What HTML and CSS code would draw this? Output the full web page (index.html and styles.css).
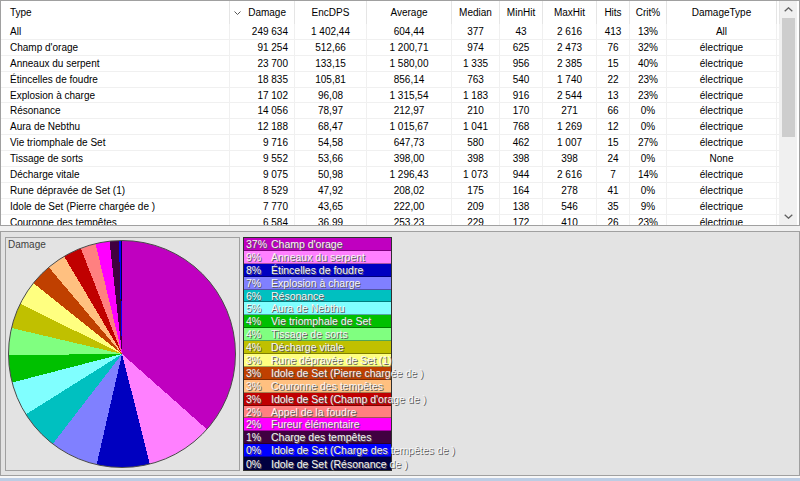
FILE: index.html
```html
<!DOCTYPE html>
<html lang="fr">
<head>
<meta charset="utf-8">
<title>Damage</title>
<link rel="stylesheet" href="styles.css">
</head>
<body>
<div class="app">
  <div class="grid-panel">
    <div class="table">
      <div class="cols head">
        <div class="c l">Type</div>
        <div class="c r sort"><svg class="sort-ico" width="7" height="4" viewBox="0 0 7 4"><polyline points="0.5,0.5 3.5,3.5 6.5,0.5" fill="none" stroke="#555" stroke-width="1"/></svg><span>Damage</span></div>
        <div class="c">EncDPS</div>
        <div class="c">Average</div>
        <div class="c">Median</div>
        <div class="c">MinHit</div>
        <div class="c">MaxHit</div>
        <div class="c">Hits</div>
        <div class="c">Crit%</div>
        <div class="c">DamageType</div>
        <div class="c"></div>
      </div>
      <div class="cols row"><div class="c l">All</div><div class="c r">249&nbsp;634</div><div class="c">1&nbsp;402,44</div><div class="c">604,44</div><div class="c">377</div><div class="c">43</div><div class="c">2&nbsp;616</div><div class="c">413</div><div class="c">13%</div><div class="c">All</div><div class="c"></div></div>
      <div class="cols row"><div class="c l">Champ d'orage</div><div class="c r">91&nbsp;254</div><div class="c">512,66</div><div class="c">1&nbsp;200,71</div><div class="c">974</div><div class="c">625</div><div class="c">2&nbsp;473</div><div class="c">76</div><div class="c">32%</div><div class="c">électrique</div><div class="c"></div></div>
      <div class="cols row"><div class="c l">Anneaux du serpent</div><div class="c r">23&nbsp;700</div><div class="c">133,15</div><div class="c">1&nbsp;580,00</div><div class="c">1&nbsp;335</div><div class="c">956</div><div class="c">2&nbsp;385</div><div class="c">15</div><div class="c">40%</div><div class="c">électrique</div><div class="c"></div></div>
      <div class="cols row"><div class="c l">Étincelles de foudre</div><div class="c r">18&nbsp;835</div><div class="c">105,81</div><div class="c">856,14</div><div class="c">763</div><div class="c">540</div><div class="c">1&nbsp;740</div><div class="c">22</div><div class="c">23%</div><div class="c">électrique</div><div class="c"></div></div>
      <div class="cols row"><div class="c l">Explosion à charge</div><div class="c r">17&nbsp;102</div><div class="c">96,08</div><div class="c">1&nbsp;315,54</div><div class="c">1&nbsp;183</div><div class="c">916</div><div class="c">2&nbsp;544</div><div class="c">13</div><div class="c">23%</div><div class="c">électrique</div><div class="c"></div></div>
      <div class="cols row"><div class="c l">Résonance</div><div class="c r">14&nbsp;056</div><div class="c">78,97</div><div class="c">212,97</div><div class="c">210</div><div class="c">170</div><div class="c">271</div><div class="c">66</div><div class="c">0%</div><div class="c">électrique</div><div class="c"></div></div>
      <div class="cols row"><div class="c l">Aura de Nebthu</div><div class="c r">12&nbsp;188</div><div class="c">68,47</div><div class="c">1&nbsp;015,67</div><div class="c">1&nbsp;041</div><div class="c">768</div><div class="c">1&nbsp;269</div><div class="c">12</div><div class="c">0%</div><div class="c">électrique</div><div class="c"></div></div>
      <div class="cols row"><div class="c l">Vie triomphale de Set</div><div class="c r">9&nbsp;716</div><div class="c">54,58</div><div class="c">647,73</div><div class="c">580</div><div class="c">462</div><div class="c">1&nbsp;007</div><div class="c">15</div><div class="c">27%</div><div class="c">électrique</div><div class="c"></div></div>
      <div class="cols row"><div class="c l">Tissage de sorts</div><div class="c r">9&nbsp;552</div><div class="c">53,66</div><div class="c">398,00</div><div class="c">398</div><div class="c">398</div><div class="c">398</div><div class="c">24</div><div class="c">0%</div><div class="c">None</div><div class="c"></div></div>
      <div class="cols row"><div class="c l">Décharge vitale</div><div class="c r">9&nbsp;075</div><div class="c">50,98</div><div class="c">1&nbsp;296,43</div><div class="c">1&nbsp;073</div><div class="c">944</div><div class="c">2&nbsp;616</div><div class="c">7</div><div class="c">14%</div><div class="c">électrique</div><div class="c"></div></div>
      <div class="cols row"><div class="c l">Rune dépravée de Set (1)</div><div class="c r">8&nbsp;529</div><div class="c">47,92</div><div class="c">208,02</div><div class="c">175</div><div class="c">164</div><div class="c">278</div><div class="c">41</div><div class="c">0%</div><div class="c">électrique</div><div class="c"></div></div>
      <div class="cols row"><div class="c l">Idole de Set (Pierre chargée de )</div><div class="c r">7&nbsp;770</div><div class="c">43,65</div><div class="c">222,00</div><div class="c">209</div><div class="c">138</div><div class="c">546</div><div class="c">35</div><div class="c">9%</div><div class="c">électrique</div><div class="c"></div></div>
      <div class="cols row"><div class="c l">Couronne des tempêtes</div><div class="c r">6&nbsp;584</div><div class="c">36,99</div><div class="c">253,23</div><div class="c">229</div><div class="c">172</div><div class="c">410</div><div class="c">26</div><div class="c">23%</div><div class="c">électrique</div><div class="c"></div></div>
    </div>
    <div class="vscroll">
      <div class="sb-btn"><svg width="9" height="5" viewBox="0 0 9 5"><polyline points="0.7,4.3 4.5,0.8 8.3,4.3" fill="none" stroke="#606060" stroke-width="1.3"/></svg></div>
      <div class="sb-track"><div class="sb-thumb"></div></div>
      <div class="sb-btn"><svg width="9" height="5" viewBox="0 0 9 5"><polyline points="0.7,0.7 4.5,4.2 8.3,0.7" fill="none" stroke="#606060" stroke-width="1.3"/></svg></div>
    </div>
  </div>
  <div class="splitter"></div>
  <div class="chart-panel">
    <div class="groupbox">
      <div class="pie"></div>
      <div class="chart-label">Damage</div>
    </div>
    <div class="legend">
      <div class="li k1"><span class="pct">37%</span><span>Champ d'orage</span></div>
      <div class="li k2"><span class="pct">9%</span><span>Anneaux du serpent</span></div>
      <div class="li k3"><span class="pct">8%</span><span>Étincelles de foudre</span></div>
      <div class="li k4"><span class="pct">7%</span><span>Explosion à charge</span></div>
      <div class="li k5"><span class="pct">6%</span><span>Résonance</span></div>
      <div class="li k6"><span class="pct">5%</span><span>Aura de Nebthu</span></div>
      <div class="li k7"><span class="pct">4%</span><span>Vie triomphale de Set</span></div>
      <div class="li k8"><span class="pct">4%</span><span>Tissage de sorts</span></div>
      <div class="li k9"><span class="pct">4%</span><span>Décharge vitale</span></div>
      <div class="li k10"><span class="pct">3%</span><span>Rune dépravée de Set (1)</span></div>
      <div class="li k11"><span class="pct">3%</span><span>Idole de Set (Pierre chargée de )</span></div>
      <div class="li k12"><span class="pct">3%</span><span>Couronne des tempêtes</span></div>
      <div class="li k13"><span class="pct">3%</span><span>Idole de Set (Champ d'orage de )</span></div>
      <div class="li k14"><span class="pct">2%</span><span>Appel de la foudre</span></div>
      <div class="li k15"><span class="pct">2%</span><span>Fureur élémentaire</span></div>
      <div class="li k16"><span class="pct">1%</span><span>Charge des tempêtes</span></div>
      <div class="li k17"><span class="pct">0%</span><span>Idole de Set (Charge des tempêtes de )</span></div>
      <div class="li k18"><span class="pct">0%</span><span>Idole de Set (Résonance de )</span></div>
    </div>
  </div>
  <div class="bottom-strip"></div>
</div>
</body>
</html>
```
FILE: styles.css
```css
* { box-sizing: border-box; }
html, body { margin: 0; padding: 0; }
body {
  width: 800px;
  height: 481px;
  overflow: hidden;
  background: #f0f0f0;
  font-family: "Liberation Sans", Arial, sans-serif;
  font-size: 10px;
  color: #000;
}
.app { display: flex; flex-direction: column; height: 481px; }

/* ---------- grid ---------- */
.grid-panel {
  height: 226px;
  flex: none;
  border: 1px solid #a0a0a0;
  background: #fff;
  display: flex;
  overflow: hidden;
}
.table { width: 779px; flex: none; overflow: hidden; }
.cols {
  display: grid;
  grid-template-columns: 229px 65px 72px 85px 48px 43px 54px 33px 37px 110px 3px;
}
.head { height: 23px; }
.head .c { border-right: 1px solid #e5e5e5; }
.row { height: 15.9px; }
.row .c { border-right: 1px solid #f0f0f0; border-bottom: 1px solid #f0f0f0; }
.c {
  display: flex;
  align-items: center;
  justify-content: center;
  white-space: nowrap;
  overflow: hidden;
}
.c.l { justify-content: flex-start; padding-left: 9px; }
.c.r { justify-content: flex-end; padding-right: 6px; }
.c.sort { justify-content: space-between; padding-left: 4px; padding-right: 8px; }
.sort-ico { display: block; }

/* scrollbar */
.vscroll {
  width: 17px;
  flex: none;
  background: #f0f0f0;
  display: flex;
  flex-direction: column;
}
.sb-btn { height: 17px; flex: none; display: flex; align-items: center; justify-content: center; }
.sb-track { flex: 1; padding: 0 2px; }
.sb-thumb { height: 119px; background: #cdcdcd; }

.splitter { height: 5px; flex: none; }

/* ---------- chart ---------- */
.chart-panel {
  height: 245px;
  flex: none;
  border: 1px solid #a0a0a0;
  background: #e3e3e3;
  display: flex;
  align-items: flex-start;
  gap: 3px;
  padding: 5px 0 0 4px;
}
.groupbox {
  position: relative;
  width: 235px;
  height: 234px;
  flex: none;
  border: 1px solid #a0a0a0;
  padding: 2px;
}
.pie {
  width: 228px;
  height: 228px;
  border-radius: 50%;
  border: 1px solid #4a4a4a;
  background: conic-gradient(
    #c000c0 0 36.555%,
    #ff80ff 0 46.049%,
    #0000c0 0 53.594%,
    #8080ff 0 60.445%,
    #00c0c0 0 66.076%,
    #80ffff 0 70.958%,
    #00c000 0 74.850%,
    #80ff80 0 78.676%,
    #c0c000 0 82.311%,
    #ffff80 0 85.728%,
    #c04000 0 88.841%,
    #ffc080 0 91.478%,
    #c00000 0 94.082%,
    #ff8080 0 96.245%,
    #ff00ff 0 98.248%,
    #400040 0 99.570%,
    #0000ff 0 99.850%,
    #000040 0 100%
  );
}
.chart-label {
  position: absolute;
  left: 2px;
  top: 1px;
  line-height: 12px;
  color: #404040;
  font-size: 10px;
}

.legend {
  width: 149px;
  flex: none;
  border: 1px solid #303030;
}
.li {
  height: 12.9px;
  display: flex;
  align-items: center;
  white-space: nowrap;
  color: #f6f6f6;
  font-size: 10.5px;
  text-shadow: 1px 1px 0 #5a5a5a;
  border-bottom: 1px solid rgba(0, 0, 0, 0.35);
}
.li:last-child { border-bottom: 0; }
.pct { width: 27px; flex: none; padding-left: 2px; }
.k1 { background: #c000c0; }
.k2 { background: #ff80ff; }
.k3 { background: #0000c0; }
.k4 { background: #8080ff; }
.k5 { background: #00c0c0; }
.k6 { background: #80ffff; }
.k7 { background: #00c000; }
.k8 { background: #80ff80; }
.k9 { background: #c0c000; }
.k10 { background: #ffff80; }
.k11 { background: #c04000; }
.k12 { background: #ffc080; }
.k13 { background: #c00000; }
.k14 { background: #ff8080; }
.k15 { background: #ff00ff; }
.k16 { background: #400040; }
.k17 { background: #0000ff; }
.k18 { background: #000040; }

.bottom-strip {
  height: 5px;
  flex: none;
  border-top: 2px solid #f7f7f7;
  background: #bccde4;
}
```
